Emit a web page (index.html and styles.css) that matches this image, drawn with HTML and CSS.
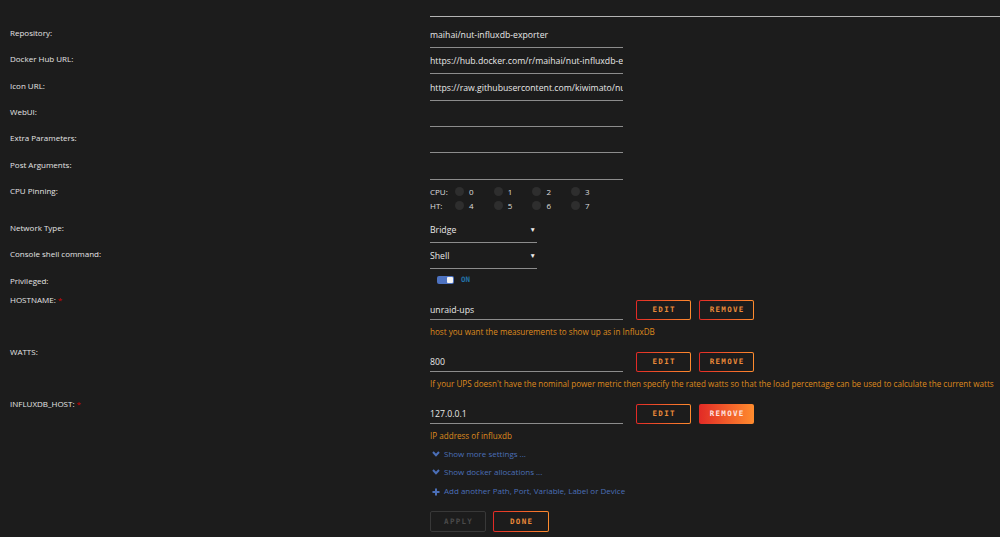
FILE: index.html
```html
<!DOCTYPE html>
<html>
<head>
<meta charset="utf-8">
<link rel="stylesheet" href="styles.css">
</head>
<body>
<div class="form">
  <div class="row row-top"><div></div><div class="topline"></div></div>

  <div class="row"><div class="lbl">Repository:</div><div class="field">maihai/nut-influxdb-exporter</div></div>
  <div class="row"><div class="lbl">Docker Hub URL:</div><div class="field">https://hub.docker.com/r/maihai/nut-influxdb-exporter</div></div>
  <div class="row"><div class="lbl">Icon URL:</div><div class="field">https://raw.githubusercontent.com/kiwimato/nut-influxdb-exporter/master/icon.png</div></div>
  <div class="row"><div class="lbl">WebUI:</div><div class="field"></div></div>
  <div class="row"><div class="lbl">Extra Parameters:</div><div class="field"></div></div>
  <div class="row"><div class="lbl">Post Arguments:</div><div class="field"></div></div>

  <div class="row row-cpu"><div class="lbl">CPU Pinning:</div>
    <div class="cpu">
      <div class="cpu-line"><span class="cpu-lbl">CPU:</span>
        <span class="opt"><i class="dot"></i>0</span><span class="opt"><i class="dot"></i>1</span><span class="opt"><i class="dot"></i>2</span><span class="opt"><i class="dot"></i>3</span>
      </div>
      <div class="cpu-line"><span class="cpu-lbl">HT:</span>
        <span class="opt"><i class="dot"></i>4</span><span class="opt"><i class="dot"></i>5</span><span class="opt"><i class="dot"></i>6</span><span class="opt"><i class="dot"></i>7</span>
      </div>
    </div>
  </div>

  <div class="row"><div class="lbl">Network Type:</div><div class="field select"><span>Bridge</span><span class="arrow">&#9660;</span></div></div>
  <div class="row"><div class="lbl">Console shell command:</div><div class="field select"><span>Shell</span><span class="arrow">&#9660;</span></div></div>
  <div class="row row-priv"><div class="lbl">Privileged:</div><div class="toggle-wrap"><span class="toggle"><span class="knob"></span></span><span class="on">ON</span></div></div>

  <div class="row row-env"><div class="lbl">HOSTNAME: <span class="req">*</span></div>
    <div class="env">
      <div class="env-line"><div class="field env-field">unraid-ups</div><button class="btn">EDIT</button><button class="btn">REMOVE</button></div>
      <div class="desc">host you want the measurements to show up as in InfluxDB</div>
    </div>
  </div>
  <div class="row row-env"><div class="lbl">WATTS:</div>
    <div class="env">
      <div class="env-line"><div class="field env-field">800</div><button class="btn">EDIT</button><button class="btn">REMOVE</button></div>
      <div class="desc">If your UPS doesn't have the nominal power metric then specify the rated watts so that the load percentage can be used to calculate the current watts</div>
    </div>
  </div>
  <div class="row row-env"><div class="lbl">INFLUXDB_HOST: <span class="req">*</span></div>
    <div class="env">
      <div class="env-line"><div class="field env-field">127.0.0.1</div><button class="btn">EDIT</button><button class="btn btn-fill">REMOVE</button></div>
      <div class="desc">IP address of influxdb</div>
    </div>
  </div>

  <div class="row row-links"><div></div>
    <div class="links">
      <div class="link"><svg class="ico" viewBox="0 0 8 6" width="8" height="6"><polyline points="1,1 4,4.2 7,1" fill="none" stroke="#4b6fb8" stroke-width="2"/></svg>Show more settings ...</div>
      <div class="link"><svg class="ico" viewBox="0 0 8 6" width="8" height="6"><polyline points="1,1 4,4.2 7,1" fill="none" stroke="#4b6fb8" stroke-width="2"/></svg>Show docker allocations ...</div>
      <div class="link"><svg class="ico" viewBox="0 0 8 8" width="8" height="8"><path d="M4 0.5V7.5M0.5 4H7.5" stroke="#4b6fb8" stroke-width="2"/></svg>Add another Path, Port, Variable, Label or Device</div>
      <div class="actions"><button class="btn btn-off">APPLY</button><button class="btn btn-done">DONE</button></div>
    </div>
  </div>
</div>
</body>
</html>
```

FILE: styles.css
```css
html, body {
  margin: 0;
  padding: 0;
  background: #1c1c1c;
  color: #dcdcdc;
  font-family: "Open Sans", "Liberation Sans", sans-serif;
}
.form {
  width: 1000px;
}
.row {
  display: grid;
  grid-template-columns: 420px 1fr;
  padding-left: 10px;
  height: 26.33px;
}
.row-top {
  height: 27px;
}
.topline {
  height: 16px;
  border-bottom: 1px solid #b4b4b4;
}
.lbl {
  font-size: 8px;
  line-height: 12px;
  color: #e4e4e4;
  white-space: nowrap;
}
.req {
  color: #d40000;
}
.field {
  box-sizing: border-box;
  width: 193px;
  height: 19px;
  margin-top: 2px;
  font-size: 8.7px;
  line-height: 12px;
  padding-bottom: 4px;
  border-bottom: 1px solid #8c8c8c;
  color: #e8e8e8;
  white-space: nowrap;
  overflow: hidden;
  text-overflow: clip;
}
.select {
  width: 107px;
  display: flex;
  justify-content: space-between;
}
.arrow {
  font-size: 6.5px;
  line-height: 12px;
  padding-right: 1px;
  color: #eee;
}
.row-cpu {
  height: 37px;
}
.cpu-line {
  display: flex;
  align-items: center;
  height: 13.7px;
  font-size: 8px;
  color: #dedede;
}
.cpu-lbl {
  width: 25px;
}
.opt {
  display: flex;
  align-items: center;
  width: 38.7px;
}
.dot {
  width: 9px;
  height: 9px;
  border-radius: 50%;
  background: #2e2e2e;
  margin-right: 5px;
}
.row-priv {
  height: 19px;
}
.toggle-wrap {
  display: flex;
  align-items: center;
  padding-left: 7px;
  margin-top: 1px;
  height: 8px;
}
.toggle {
  display: flex;
  justify-content: flex-end;
  width: 17px;
  height: 8px;
  border-radius: 2px;
  background: #4d72c0;
  box-sizing: border-box;
  padding: 1px;
}
.knob {
  width: 6px;
  height: 6px;
  background: #f4f4f4;
  border-radius: 1px;
}
.on {
  margin-left: 7px;
  font-family: "DejaVu Sans Mono", monospace;
  font-weight: bold;
  font-size: 7.5px;
  color: #2272a8;
}
.row-env {
  height: 52px;
}
.env {
  padding-top: 6px;
}
.env-line {
  display: flex;
  align-items: flex-end;
  height: 20px;
}
.env-field {
  height: 20px;
  margin-top: 0;
  padding-top: 4px;
  padding-bottom: 3px;
  margin-right: 13px;
}
.btn {
  box-sizing: border-box;
  height: 20px;
  width: 55px;
  margin: 0 8px 0 0;
  padding: 0;
  border: 1px solid transparent;
  border-radius: 2px;
  background: linear-gradient(#1c1c1c, #1c1c1c) padding-box, linear-gradient(90deg, #e22a26, #ff8c2e) border-box;
  color: #ea8a3a;
  font-family: "DejaVu Sans Mono", monospace;
  font-weight: bold;
  font-size: 7.5px;
  letter-spacing: 1.3px;
  text-indent: 1.3px;
  cursor: pointer;
}
.btn-fill {
  background: linear-gradient(90deg, #e22a26, #ff8c2e) border-box;
  color: #ffe4e0;
}
.desc {
  margin-top: 6px;
  font-size: 8.1px;
  line-height: 12px;
  color: #df8a1c;
  white-space: nowrap;
}
.row-links {
  height: auto;
}
.links {
  margin-top: -2px;
}
.link {
  display: flex;
  height: 18.5px;
  font-size: 8px;
  line-height: 12px;
  color: #4b6fb8;
  align-items: flex-start;
}
.ico {
  margin: 3px 4px 0 2px;
  flex: none;
}
.actions {
  display: flex;
  margin-top: 8px;
}
.actions .btn {
  height: 21px;
  width: 56px;
  margin-right: 7px;
}
.btn-off {
  background: transparent;
  border-color: #383838;
  color: #4a4a4a;
}
```
